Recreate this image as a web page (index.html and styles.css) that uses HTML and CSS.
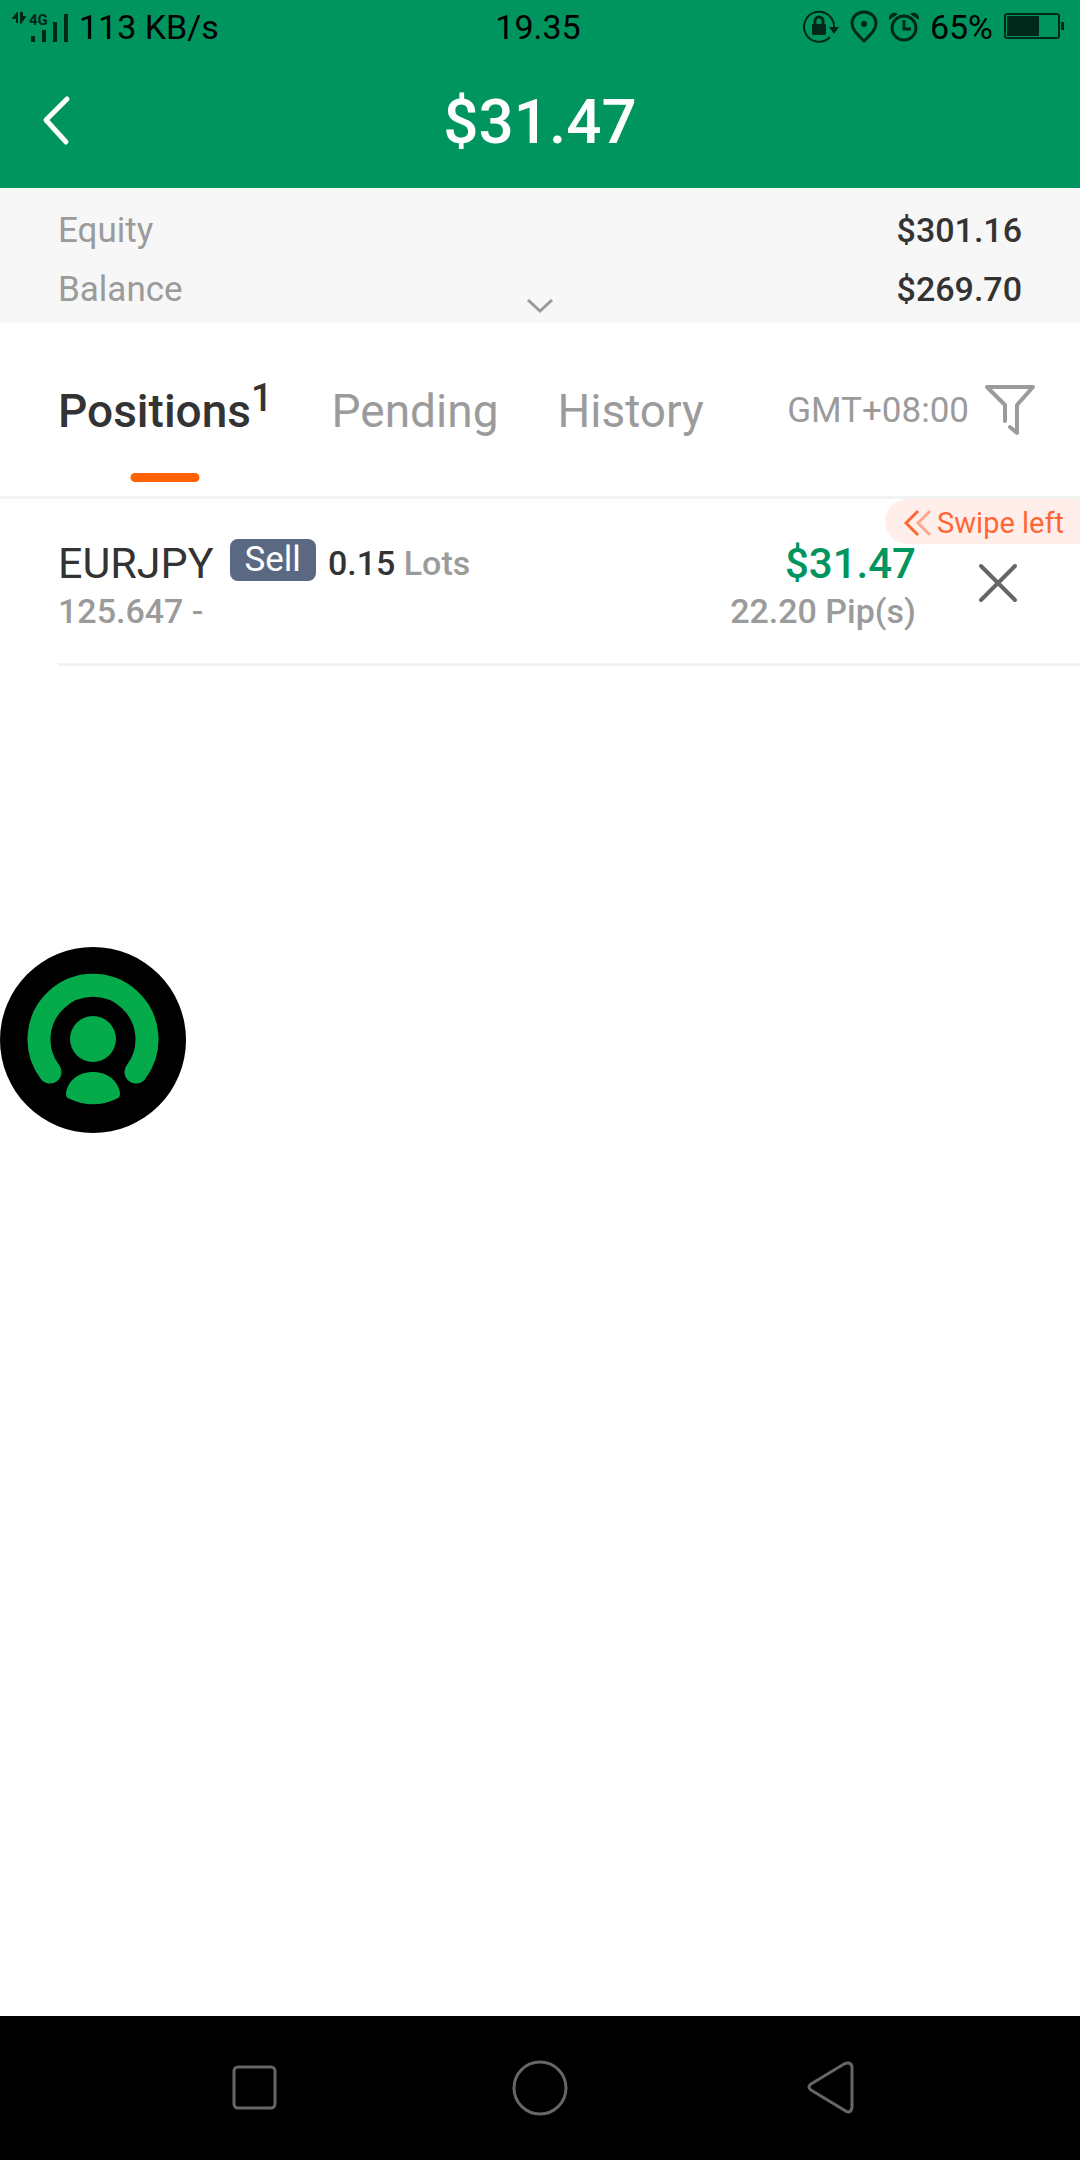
FILE: index.html
```html
<!DOCTYPE html>
<html lang="en">
<head>
<meta charset="utf-8">
<meta name="viewport" content="width=device-width, initial-scale=1">
<title>Positions</title>
<link rel="stylesheet" href="styles.css">
</head>
<body>
<header class="header">
  <div class="status">
    <div class="status-group">
      <svg class="signal" width="60" height="32" viewBox="0 0 60 32" aria-hidden="true">
        <path d="M0 7l5-6h1v11H4V8H0zM14 6l-5 7H8V1h3v4h3z"/>
        <text class="signal-label" x="17" y="14">4G</text>
        <path d="M19 25h4v6h-4zM30 19h4v12h-4zM41 11h4v20h-4zM52 3h4v28h-4z"/>
      </svg>
      <span>113 KB/s</span>
    </div>
    <span class="status-time">19.35</span>
    <div class="status-group status-end">
      <svg width="36" height="34" viewBox="0 0 36 34" aria-hidden="true">
        <path class="line thin" d="M31 18A15 15 0 1 0 27 27"/>
        <path d="M26 17h10l-5 7z"/>
        <rect x="9" y="14" width="14" height="11" rx="1"/>
        <path class="line" d="M12 15v-4a4 4 0 0 1 8 0v4"/>
      </svg>
      <svg width="28" height="34" viewBox="0 0 28 34" aria-hidden="true">
        <path class="line" d="M14 31C8 25 2 20 2 13a12 11 0 0 1 24 0C26 20 20 25 14 31z"/>
        <circle cx="14" cy="14" r="3"/>
      </svg>
      <svg width="30" height="34" viewBox="0 0 30 34" aria-hidden="true">
        <circle class="line" cx="15" cy="18" r="12"/>
        <path class="line" d="M15 10v9h7"/>
        <path d="M0 10C-1 3 6 1 9 4zM30 10C31 3 24 1 21 4z"/>
      </svg>
      <span>65%</span>
      <svg width="60" height="34" viewBox="0 0 60 34" aria-hidden="true">
        <rect class="line thin" x="1" y="4" width="54" height="24" rx="2"/>
        <path d="M3 6h32v20H3zM57 12h3v8h-3z"/>
      </svg>
    </div>
  </div>
  <div class="titlebar">
    <button class="back" type="button" aria-label="Back">
      <svg width="32" height="52" viewBox="0 0 32 52" aria-hidden="true"><path d="M27 4L6 25l20 22"/></svg>
    </button>
    <h1 class="title">$31.47</h1>
  </div>
</header>

<section class="summary">
  <dl class="summary-list">
    <div class="summary-row"><dt>Equity</dt><dd>$301.16</dd></div>
    <div class="summary-row"><dt>Balance</dt><dd>$269.70</dd></div>
  </dl>
  <button class="expand" type="button" aria-label="Show more">
    <svg width="28" height="14" viewBox="0 0 28 14" aria-hidden="true"><path d="M2 1l12 11L26 1"/></svg>
  </button>
</section>

<nav class="tabs">
  <a class="tab tab-active" href="#positions">Positions<span class="tab-count">1</span></a>
  <a class="tab" href="#pending">Pending</a>
  <a class="tab" href="#history">History</a>
  <button class="filter" type="button">
    <span>GMT+08:00</span>
    <svg width="52" height="56" viewBox="0 0 52 56" aria-hidden="true"><path d="M21 38V22L3 4h46L33 22v28l-7-6"/></svg>
  </button>
</nav>

<main class="content" id="positions">
  <article class="position">
    <div class="position-body">
      <div class="position-line">
        <h2 class="symbol">EURJPY</h2>
        <span class="side">Sell</span>
        <span class="lots"><b>0.15</b> Lots</span>
      </div>
      <div class="position-line detail">125.647 -</div>
    </div>
    <div class="position-result">
      <div class="position-line profit">$31.47</div>
      <div class="position-line detail">22.20 Pip(s)</div>
    </div>
    <button class="close" type="button" aria-label="Close position">
      <svg width="44" height="44" viewBox="0 0 44 44" aria-hidden="true"><path d="M5 7l34 34M39 7L5 41"/></svg>
    </button>
    <div class="swipe">
      <svg width="28" height="28" viewBox="0 0 28 28" aria-hidden="true"><path d="M14 2L2 14l12 12"/><path class="faded" d="M26 2L14 14l12 12"/></svg>
      <span>Swipe left</span>
    </div>
  </article>
  <button class="assist" type="button" aria-label="Assistant">
    <svg width="186" height="186" viewBox="0 0 186 186" aria-hidden="true">
      <circle cx="93" cy="93" r="93"/>
      <path class="assist-ring" d="M50 125A54 54 0 1 1 136 125"/>
      <circle class="assist-fill" cx="93" cy="92" r="23"/>
      <path class="assist-fill" d="M66 146C68 134 78 125 93 125s25 9 27 21c0 4-1 5-4 6-14 7-32 7-46 0-3-1-4-2-4-6z"/>
    </svg>
  </button>
</main>

<footer class="navbar">
  <button type="button" aria-label="Recent apps"><svg width="60" height="60" viewBox="0 0 60 60" aria-hidden="true"><rect x="12" y="9" width="41" height="41" rx="4"/></svg></button>
  <button type="button" aria-label="Home"><svg width="60" height="60" viewBox="0 0 60 60" aria-hidden="true"><circle cx="30" cy="30" r="26"/></svg></button>
  <button type="button" aria-label="Back"><svg width="60" height="60" viewBox="0 0 60 60" aria-hidden="true"><path d="M13 26L46 6q7-3 8 3v40q-1 8-8 3L13 32q-4-3 0-6z"/></svg></button>
</footer>
</body>
</html>
```

FILE: styles.css
```css
* {
  box-sizing: border-box;
}

body {
  margin: 0;
  min-height: 100vh;
  display: flex;
  flex-direction: column;
  background: #fff;
  color: #333;
  font-family: Roboto, "Liberation Sans", sans-serif;
  font-size: 34px;
}

button {
  display: flex;
  align-items: center;
  justify-content: center;
  margin: 0;
  padding: 0;
  border: 0;
  background: none;
  color: inherit;
  font: inherit;
}

svg {
  display: block;
  flex: none;
}

h1, h2, dl, dd {
  margin: 0;
}

/* Header */
.header {
  background: #00955f;
}

.status {
  display: grid;
  grid-template-columns: 1fr auto 1fr;
  align-items: center;
  height: 54px;
  padding: 0 16px 0 12px;
  color: #000;
  font-size: 34px;
}

.status-group {
  display: flex;
  align-items: center;
  gap: 7px;
}

.status-end {
  justify-content: flex-end;
  gap: 11px;
}

.status svg {
  fill: #00281a;
  overflow: visible;
}

.signal-label {
  font-size: 15px;
  font-weight: 700;
}

.status .line {
  fill: none;
  stroke: #00281a;
  stroke-width: 3;
}

.status .thin {
  stroke-width: 2;
}

.titlebar {
  display: grid;
  grid-template-columns: 112px 1fr 112px;
  align-items: center;
  height: 134px;
}

.back {
  height: 100%;
}

.back svg {
  fill: none;
  stroke: #fff;
  stroke-width: 5;
  stroke-linecap: round;
  stroke-linejoin: round;
}

.title {
  color: #fff;
  font-size: 62px;
  font-weight: 500;
  text-align: center;
}

/* Account summary */
.summary {
  position: relative;
  padding: 13px 58px 4px;
  background: #f7f7f7;
}

.summary-row {
  display: flex;
  align-items: baseline;
  justify-content: space-between;
  line-height: 59px;
}

.summary-row dt {
  color: #9b9b9b;
  font-size: 35px;
}

.summary-row dd {
  font-weight: 500;
}

.expand {
  position: absolute;
  bottom: 10px;
  left: 50%;
  transform: translateX(-50%);
}

.expand svg {
  fill: none;
  stroke: #9b9b9b;
  stroke-width: 3;
}

/* Tabs */
.tabs {
  display: flex;
  align-items: center;
  gap: 59px;
  height: 176px;
  padding: 2px 44px 0 58px;
  border-bottom: 3px solid #f3f3f3;
}

.tab {
  position: relative;
  color: #9b9b9b;
  font-size: 46px;
  line-height: 56px;
  text-decoration: none;
  white-space: nowrap;
}

.tab-active {
  display: flex;
  color: #333;
  font-weight: 500;
}

.tab-active::after {
  content: "";
  position: absolute;
  bottom: -43px;
  left: 50%;
  width: 69px;
  height: 9px;
  border-radius: 5px;
  background: #ff6200;
  transform: translateX(-50%);
}

.tab-count {
  font-size: 38px;
  line-height: 30px;
}

.filter {
  gap: 15px;
  margin-left: auto;
  color: #9b9b9b;
  font-size: 35px;
}

.filter svg {
  fill: none;
  stroke: #9b9b9b;
  stroke-width: 4;
  stroke-linecap: round;
  stroke-linejoin: round;
}

/* Position list */
.content {
  position: relative;
  flex: 1;
}

.position {
  position: relative;
  display: flex;
  margin-left: 58px;
  border-bottom: 3px solid #f3f3f3;
}

.position-body,
.position-result {
  padding: 40px 0 28px;
}

.position-body {
  flex: 1;
}

.position-line {
  display: flex;
  align-items: center;
  height: 48px;
}

.position-result .position-line {
  justify-content: flex-end;
}

.symbol {
  font-size: 43px;
  font-weight: 400;
}

.side {
  align-self: flex-start;
  margin: 0 12px 0 16px;
  padding: 0 15px;
  border-radius: 8px;
  background: #5a6882;
  color: #fff;
  font-size: 35px;
  line-height: 42px;
}

.lots,
.detail {
  color: #9b9b9b;
  font-weight: 500;
}

.lots b {
  color: #333;
  font-weight: 500;
}

.profit {
  color: #00955f;
  font-size: 42px;
  font-weight: 500;
}

.close {
  width: 164px;
}

.close svg {
  fill: none;
  stroke: #666;
  stroke-width: 4;
  stroke-linecap: round;
}

.swipe {
  position: absolute;
  top: 0;
  right: 0;
  display: flex;
  align-items: center;
  gap: 5px;
  height: 45px;
  padding: 2px 16px 0 19px;
  border-radius: 23px 0 0 23px;
  background: #ffeeea;
  color: #ff6633;
  font-size: 29px;
}

.swipe svg {
  fill: none;
  stroke: #ff6633;
  stroke-width: 3;
}

.swipe .faded {
  stroke: #ffa88c;
}

/* Floating assistant bubble */
.assist {
  position: absolute;
  top: 448px;
  left: 0;
}

.assist-ring {
  fill: none;
  stroke: #05ab4b;
  stroke-width: 23;
  stroke-linecap: round;
}

.assist-fill {
  fill: #05ab4b;
}

/* System navigation */
.navbar {
  display: grid;
  grid-template-columns: repeat(3, 1fr);
  height: 144px;
  padding: 0 10%;
  background: #000;
}

.navbar svg {
  fill: none;
  stroke: #666;
  stroke-width: 3;
}
```
